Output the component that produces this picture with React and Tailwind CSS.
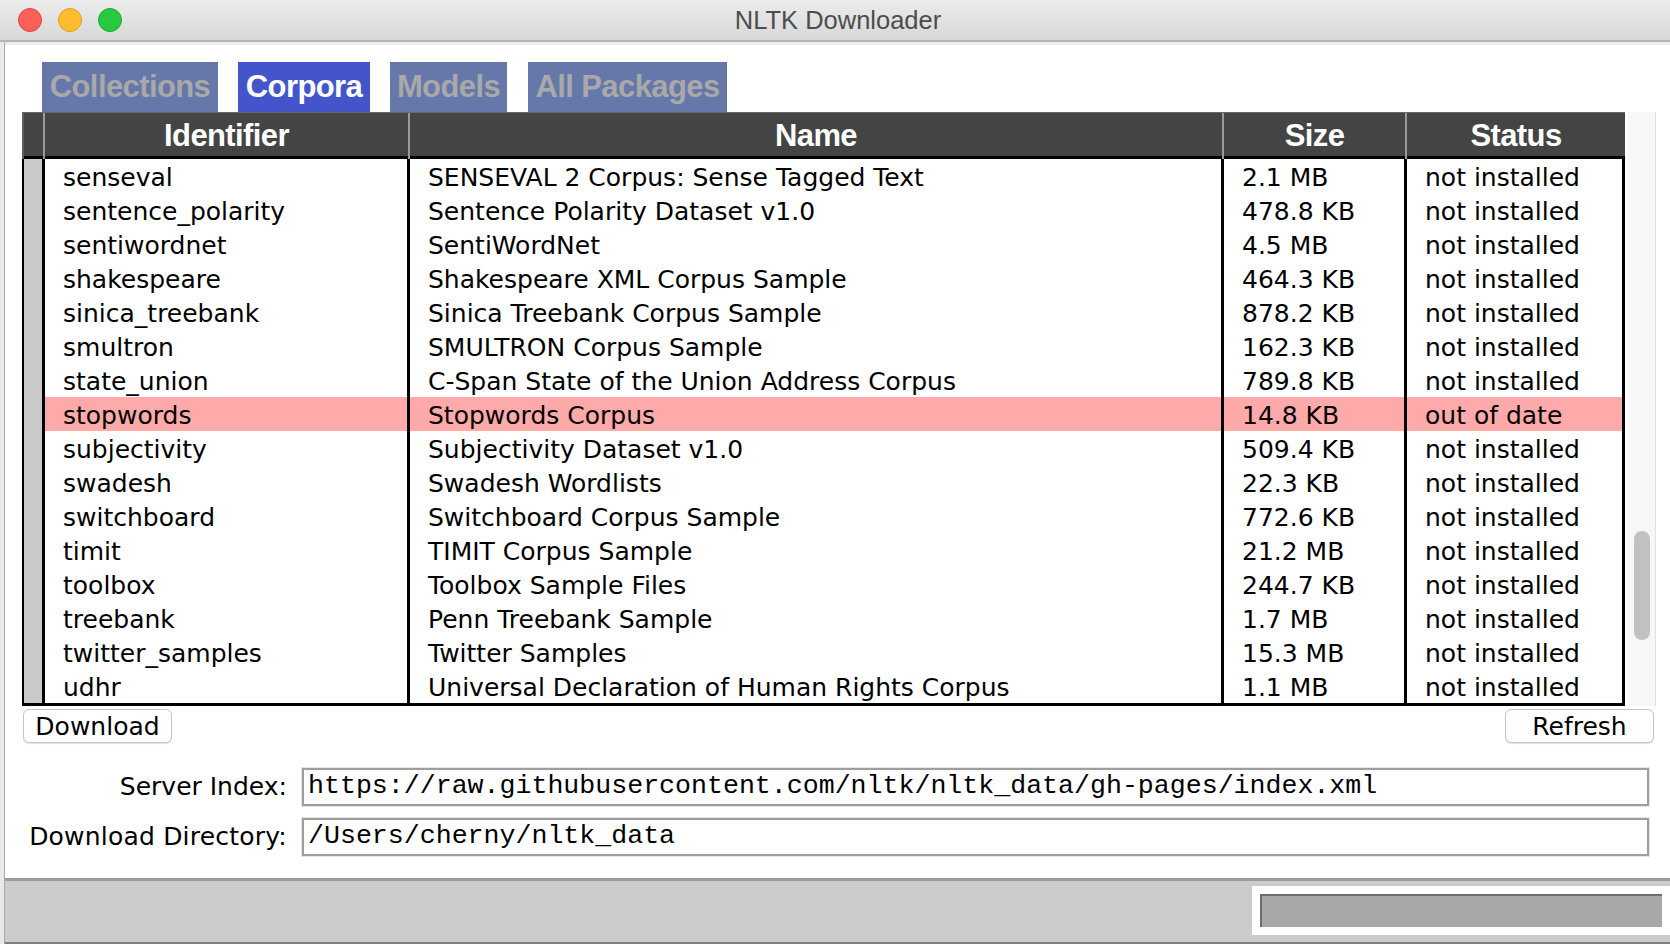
const rows = [
  ["senseval", "SENSEVAL 2 Corpus: Sense Tagged Text", "2.1 MB", "not installed"],
  ["sentence_polarity", "Sentence Polarity Dataset v1.0", "478.8 KB", "not installed"],
  ["sentiwordnet", "SentiWordNet", "4.5 MB", "not installed"],
  ["shakespeare", "Shakespeare XML Corpus Sample", "464.3 KB", "not installed"],
  ["sinica_treebank", "Sinica Treebank Corpus Sample", "878.2 KB", "not installed"],
  ["smultron", "SMULTRON Corpus Sample", "162.3 KB", "not installed"],
  ["state_union", "C-Span State of the Union Address Corpus", "789.8 KB", "not installed"],
  ["stopwords", "Stopwords Corpus", "14.8 KB", "out of date"],
  ["subjectivity", "Subjectivity Dataset v1.0", "509.4 KB", "not installed"],
  ["swadesh", "Swadesh Wordlists", "22.3 KB", "not installed"],
  ["switchboard", "Switchboard Corpus Sample", "772.6 KB", "not installed"],
  ["timit", "TIMIT Corpus Sample", "21.2 MB", "not installed"],
  ["toolbox", "Toolbox Sample Files", "244.7 KB", "not installed"],
  ["treebank", "Penn Treebank Sample", "1.7 MB", "not installed"],
  ["twitter_samples", "Twitter Samples", "15.3 MB", "not installed"],
  ["udhr", "Universal Declaration of Human Rights Corpus", "1.1 MB", "not installed"],
];

const tabs = [
  { label: "Collections", w: "w-[176px]", active: false },
  { label: "Corpora", w: "w-[132px]", active: true },
  { label: "Models", w: "w-[117px]", active: false },
  { label: "All Packages", w: "w-[199px] ml-[1px]", active: false },
];

const cols = "grid grid-cols-[23px_365px_814px_183px_218px]";

function TitleBar() {
  return (
    <div className="relative flex h-[42px] items-center justify-center border-b-2 border-[#b4b4b4] bg-gradient-to-b from-[#ececec] to-[#d8d8d8] pl-[6px]">
      <div className="absolute left-[18px] top-[8px] flex gap-[16px]">
        <span className="h-[24px] w-[24px] rounded-full border border-[#e0443e] bg-[#fe5f57]" />
        <span className="h-[24px] w-[24px] rounded-full border border-[#dea123] bg-[#febc2e]" />
        <span className="h-[24px] w-[24px] rounded-full border border-[#1aab29] bg-[#28c840]" />
      </div>
      <span className="font-['Liberation_Sans',sans-serif] text-[25.5px] text-[#4d4d4d]">
        NLTK Downloader
      </span>
    </div>
  );
}

function Tabs() {
  return (
    <div className="flex gap-[20px] pl-[37px]">
      {tabs.map((t) => (
        <div
          key={t.label}
          className={`${t.w} flex h-[50px] items-center justify-center font-['Liberation_Sans',sans-serif] text-[31px] font-bold tracking-[-0.6px] ${
            t.active ? "bg-[#4455cc] text-white" : "bg-[#6677aa] text-[#a9a9a9]"
          }`}
        >
          {t.label}
        </div>
      ))}
    </div>
  );
}

function Table() {
  const head = ["Identifier", "Name", "Size", "Status"];
  return (
    <div className="w-[1603px]">
      <div className={`${cols} h-[44px] border-t border-[#6a6a6a] bg-[#444444]`}>
        <div className="border-l-2 border-r-2 border-l-[#5e5e5e] border-r-[#9a9a9a]" />
        {head.map((h, i) => (
          <div
            key={h}
            className={`flex items-center justify-center font-['Liberation_Sans',sans-serif] text-[31px] font-bold tracking-[-0.6px] text-white ${
              i < 3 ? "border-r-2 border-[#9a9a9a]" : ""
            }`}
          >
            {h}
          </div>
        ))}
      </div>
      <div className="border-y-[3px] border-black">
        {rows.map((r) => {
          const hl = r[0] === "stopwords";
          return (
            <div key={r[0]} className={`${cols} h-[34px]`}>
              <div className="border-l-2 border-r-[3px] border-black bg-[#c9c9c9]" />
              {r.map((c, i) => (
                <div
                  key={i}
                  className={`overflow-hidden whitespace-nowrap border-r-[3px] border-black pl-[18px] pt-[2px] text-[25px] leading-[34px] text-black ${
                    hl ? "bg-[#ffaaaa]" : "bg-white"
                  }`}
                >
                  {c}
                </div>
              ))}
            </div>
          );
        })}
      </div>
    </div>
  );
}

function Button({ children }) {
  return (
    <button className="flex h-[34px] w-[149px] items-center justify-center rounded-[6px] border border-[#c6c6c6] bg-white text-[25px] leading-none text-black shadow-[0_1px_1px_rgba(0,0,0,0.12)]">
      {children}
    </button>
  );
}

function Entry({ value }) {
  return (
    <div className="mr-[21px] flex h-[38px] items-center border-2 border-[#9e9e9e] bg-white pl-[4px] font-['Liberation_Mono',monospace] text-[26.6px] text-black shadow-[0_0_0_1px_#e4e4e4]">
      {value}
    </div>
  );
}

export default function App() {
  return (
    <div className="h-[944px] w-[1670px] overflow-hidden bg-white font-['DejaVu_Sans',sans-serif]">
      <TitleBar />
      <div className="h-[902px] bg-[#e9e9e9] pl-[4px]">
        <div className="flex h-full flex-col border-l border-[#a9a9a9] bg-white">
          <div className="h-[3px] bg-[#ececec]" />
          <div className="pt-[17px]">
            <Tabs />
          </div>
          <div className="flex pl-[17px]">
            <Table />
            <div className="ml-[3px] h-[594px] w-[28px] border-r border-[#e0e0e0] bg-[#f7f7f7]">
              <div className="ml-[6px] mt-[419px] h-[109px] w-[16px] rounded-full bg-[#c1c1c1]" />
            </div>
          </div>
          <div className="mt-[3px] flex justify-between pl-[18px] pr-[16px]">
            <Button>Download</Button>
            <Button>Refresh</Button>
          </div>
          <div className="mt-[25px] grid grid-cols-[282px_1fr] items-center gap-x-[15px] gap-y-[12px]">
            <div className="text-right text-[25px] text-black">Server Index:</div>
            <Entry value="https://raw.githubusercontent.com/nltk/nltk_data/gh-pages/index.xml" />
            <div className="text-right text-[25px] tracking-[0.2px] text-black">Download Directory:</div>
            <Entry value="/Users/cherny/nltk_data" />
          </div>
          <div className="mt-auto border-t-[3px] border-b-2 border-t-[#9c9c9c] border-b-[#808080] bg-[#cccccc] pb-[7px] pt-[5px]">
            <div className="ml-auto h-[49px] w-[418px] bg-white px-[8px] py-[8px]">
              <div className="h-full w-full border-l-2 border-t-2 border-[#6e6e6e] bg-[#a8a8a8]" />
            </div>
          </div>
        </div>
      </div>
    </div>
  );
}
